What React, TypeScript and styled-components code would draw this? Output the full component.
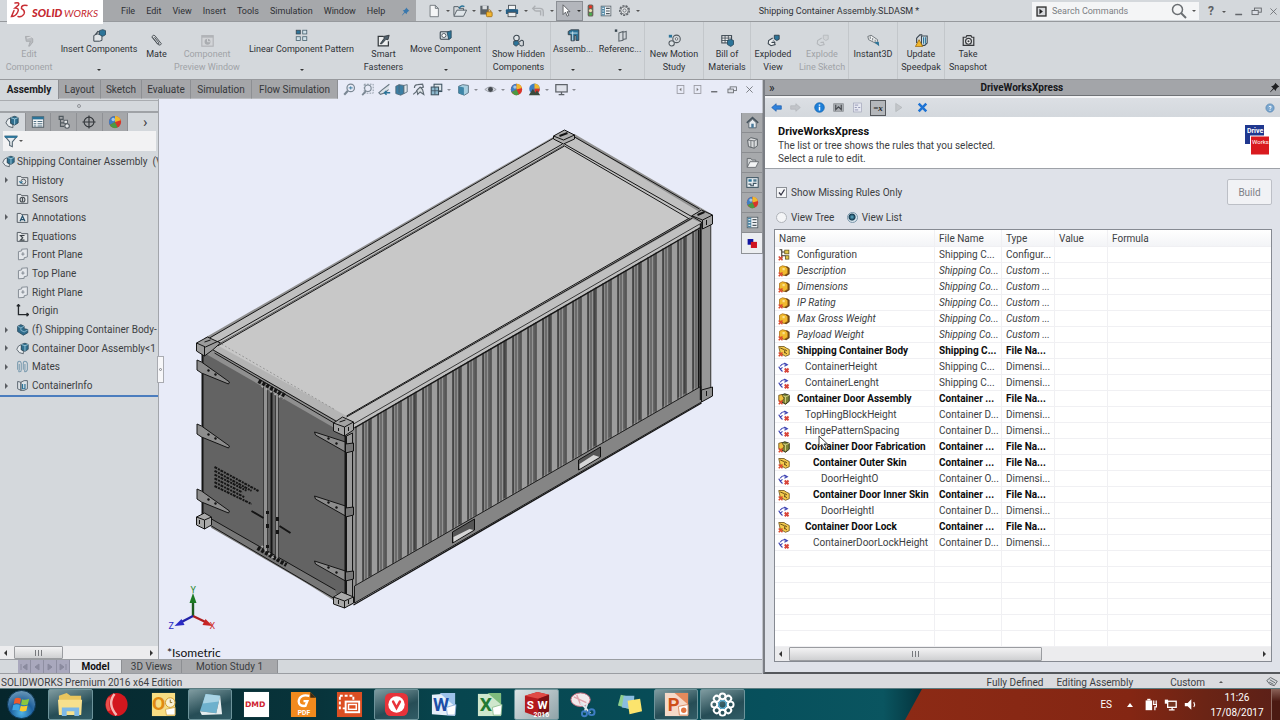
import React, { ReactNode } from 'react';
import styled, { createGlobalStyle, css } from 'styled-components';

const Global = createGlobalStyle`
  *, *::before, *::after { box-sizing: border-box; }
  body { margin: 0; overflow: hidden; }
  body, button, input, table { font-family: Roboto, "Open Sans", sans-serif; font-size: 10px; color: #3c3e42; }
  button { border: 0; padding: 0; background: none; }
  svg { display: block; flex: none; }
`;

/* ---------- icons ---------- */

const dark = '#3b4650';
const blue = '#2c7499';

const wheel = (
  <>
    <circle cx="8" cy="8" r="7" fill="#d8352a" />
    <path d="M8 8 L8 1 A7 7 0 0 0 2 11.5 Z" fill="#3d7fc4" />
    <path d="M8 8 L8 1 A7 7 0 0 1 14.6 6 Z" fill="#f0b92d" />
    <path d="M8 8 L2 11.5 A7 7 0 0 0 11 14.3 Z" fill="#4a9a45" />
    <circle cx="6" cy="5" r="2" fill="#fff" opacity=".55" />
  </>
);

const folder = <path d="M1.5 14 V3 H6 L7 4.5 H14.5 V14 Z" fill="#e3e6e8" stroke="#555d64" strokeWidth="1.2" />;

const assembly = (
  <>
    <path d="M7 3 L3 5 L1 9 L4 13 L9 14.5 L9 11 L6.5 9.5 Z" fill="#e9edf0" stroke="#56616a" strokeWidth="1.1" />
    <path d="M6.5 3 L11 1.5 L15 3 V9 L11 11.5 L6.5 9.5 Z" fill="#2f6f8f" stroke="#29495a" />
    <path d="M6.5 3 L11 4.5 L15 3 M11 4.5 V11" fill="none" stroke="#a7d1e2" />
  </>
);

const art: Record<string, ReactNode> = {
  file: <path d="M3.5 1.5 H9.5 L13 5 V14.5 H3.5 Z M9.5 1.5 V5 H13" fill="#f4f5f6" stroke="#6b7278" />,
  open: <><path d="M1 13 V3 H6 L7 5 H12 V8" fill="none" stroke="#4c555c" /><path d="M1 14 L4.5 7 H15.5 L12 14 Z" fill="#dfe5e9" stroke="#4c555c" /><path d="M7 5 Q9 1 13 3" fill="none" stroke={blue} strokeWidth="1.8" /></>,
  save: <><path d="M1.5 2 H11 V12 H1.5 Z" fill="#5b6268" /><rect x="4" y="2" width="5" height="4" fill="#d9dcdf" /><rect x="8.5" y="9" width="6.5" height="5.5" rx="1" fill="#f2b630" stroke="#a3711a" /><path d="M10 9 V7.5 Q11.8 5.500 13.500 7.500 V9" fill="none" stroke="#a3711a" /></>,
  print: <><rect x="4" y="1.5" width="8" height="5" fill="#f2f3f4" stroke="#4b5258" /><rect x="1" y="6" width="14" height="5.5" rx="1" fill="#255f86" /><rect x="3.5" y="9.5" width="9" height="5" fill="#e9ecee" stroke="#4b5258" /></>,
  undo: <path d="M2 5 H10 Q14 5 14 9 V14 M5 2 L2 5 L5 8 M5 8 H11 V13" fill="none" stroke="#adb0b4" strokeWidth="1.6" />,
  arrow: <path d="M5 1 V13 L8 10 L10 15 L12 14 L10 9.5 H13.5 Z" fill="#fff" stroke="#4a4d52" />,
  traffic: <><rect x="4.5" y="0.5" width="7" height="15" rx="2" fill="#6b665c" /><circle cx="8" cy="3.5" r="2" fill="#e53525" /><circle cx="8" cy="8" r="2" fill="#e9dfb3" /><circle cx="8" cy="12.4" r="2" fill="#49ae4d" /></>,
  list: <><rect x="1.5" y="1.5" width="13" height="13" fill="#eff1f3" stroke="#4e5960" /><rect x="2" y="2" width="4.5" height="12" fill="#4f86a4" /><path d="M8 4.5 H13 M8 8 H13 M8 11.5 H13" stroke="#4e5960" strokeWidth="1.4" /><path d="M3 4.5 H5.5 M3 8 H5.5 M3 11.5 H5.5" stroke="#dfeaf0" strokeWidth="1.4" /></>,
  gear: <><circle cx="8" cy="8" r="5.8" fill="none" stroke="#62676c" strokeWidth="2" strokeDasharray="2.6 1.4" /><circle cx="8" cy="8" r="4.6" fill="#e6e8ea" stroke="#62676c" /><circle cx="8" cy="8" r="2" fill="none" stroke="#62676c" /></>,
  pin: <path d="M9 1 L15 7 L13 7.5 L10.5 10 L10 13 L7 10 L2 15 L1.5 14.5 L6 9 L3 6 L6 5.5 L8.5 3 Z" fill="#3a78ad" />,
  pinDark: <path d="M9 1 L15 7 L13 7.5 L10.5 10 L10 13 L7 10 L2 15 L1.5 14.5 L6 9 L3 6 L6 5.5 L8.5 3 Z" fill="#1f2022" />,
  prompt: <><rect x="1.5" y="1.5" width="13" height="13" fill="#d8dadd" stroke="#333" strokeWidth="2" /><path d="M5 4 L10 8 L5 12 V8 Z" fill="#222" /></>,
  search: <><circle cx="6.5" cy="6.5" r="5" fill="none" stroke="#6a6e72" strokeWidth="1.5" /><path d="M10 10 L15 15" stroke="#6a6e72" strokeWidth="2" /></>,
  min: <path d="M2 12 H13" stroke="#63666b" strokeWidth="2.4" />,
  restore: <><rect x="5" y="3" width="10" height="6" fill="none" stroke="#63666b" strokeWidth="1.3" /><rect x="1.5" y="6.5" width="9" height="6" fill="#dcdfe6" stroke="#63666b" strokeWidth="1.3" /></>,
  close: <path d="M2.5 2.5 L13.5 13.5 M13.5 2.5 L2.5 13.5" stroke="#63666b" strokeWidth="1.4" />,
  dockL: <><rect x="2" y="1" width="12" height="14" fill="none" stroke="#9698a0" strokeWidth="1.5" /><path d="M9.5 5 L6 8 L9.5 11 Z" fill="#777" /></>,
  dockR: <><rect x="2" y="1" width="12" height="14" fill="none" stroke="#9698a0" strokeWidth="1.5" /><path d="M6.5 5 L10 8 L6.5 11 Z" fill="#777" /></>,
  /* command ribbon */
  edit: <><path d="M3 3 H9 L12 6 V10 L8 15 H7 L9 9 L4 9 Z" fill="#b9bcc0" stroke="#a2a5a9" /><path d="M5 5 L12 3" stroke="#d9dbde" strokeWidth="1.6" /></>,
  insert: <><path d="M1 8 L5 6 L11 7 V14 L8 15 H1 Z" fill="#e2e6e9" stroke={dark} strokeWidth="1.2" /><path d="M8 2 L12 0.8 L15.4 2 V7 L12 9 L8 7 Z" fill={blue} stroke="#27475a" /><path d="M3 7 L6 3 L8 4" fill="none" stroke={dark} strokeWidth="1.4" /></>,
  clip: <path d="M3 4 L10 13 Q13 15 14 12 L6 2 Q3 0.5 2.5 4 L9 12 Q11 13 11 11 L5.5 4" fill="none" stroke="#4d5358" strokeWidth="1.2" />,
  preview: <><rect x="1" y="2" width="14" height="13" fill="#d2d4d7" stroke="#b0b3b7" strokeWidth="1.4" /><path d="M1 3.5 H15" stroke="#b0b3b7" strokeWidth="2" /><circle cx="8" cy="9.5" r="3.6" fill="#a9acb0" /><path d="M8 6 V9.5 H11" stroke="#dcdee0" fill="none" /></>,
  pattern: <><rect x="1.5" y="1.5" width="5" height="4.6" fill={blue} stroke={dark} /><rect x="9.5" y="1.5" width="5" height="4.6" fill="#cfe0e8" stroke="#48616f" /><rect x="1.5" y="9.5" width="5" height="4.6" fill="#cfe0e8" stroke="#48616f" /><rect x="9.5" y="9.5" width="5" height="4.6" fill="#cfe0e8" stroke="#48616f" /></>,
  fastener: <><path d="M8 3 H1.5 V14.5 H14 V9" fill="#eceeef" stroke="#33383c" strokeWidth="1.5" /><path d="M4 12 L9 5 L8 3 L15 1.5 L13.5 7 L11 6.5 L6 12 Z" fill="#50606b" stroke="#2c3337" /></>,
  move: <><rect x="1.5" y="3.5" width="11" height="9" rx="1" fill="#d2dadf" stroke={dark} strokeWidth="1.3" /><circle cx="6" cy="8" r="2.5" fill="#fff" stroke={dark} /><path d="M10 4 L15 2 V11 L12 13 Z" fill={blue} stroke="#27475a" /></>,
  hidden: <><circle cx="5.5" cy="5" r="3.4" fill="#dfe4e7" stroke={dark} strokeWidth="1.3" /><path d="M2 9 L7 8 L9 12 L5 15 L2 13 Z" fill={blue} stroke={dark} /><path d="M9 10 Q12 6 14 9 V14 Q11 16 9 13" fill="none" stroke={dark} strokeWidth="1.3" /></>,
  features: <><path d="M1.5 3 L5 1 H14.5 V14 H11 V8 H9 V14.5 H5 V7 L1.5 7 Z" fill={blue} stroke={dark} strokeWidth="1.2" /><path d="M7 3 V14 M4 5 H13" stroke="#c8e0ec" strokeWidth="1.2" /></>,
  reference: <><path d="M6 5 L11 3 V14 L6 15 Z M11 4 L15 3 V12 L11 13" fill="none" stroke="#5b646b" strokeWidth="1.3" /><rect x="1" y="0.5" width="3" height="3" fill="#38464f" /></>,
  motion: <><circle cx="10.5" cy="6" r="4.6" fill="none" stroke="#525a60" strokeWidth="1.3" /><circle cx="10.5" cy="6" r="1.5" fill="#fff" stroke="#525a60" /><circle cx="4.5" cy="11.5" r="3.3" fill="#dce1e4" stroke="#525a60" strokeWidth="1.3" /><rect x="1" y="1" width="4" height="3.4" fill={blue} /></>,
  bom: <><rect x="1" y="2" width="12" height="9" fill="#f0f2f3" stroke={dark} strokeWidth="1.3" /><path d="M1 5 H13 M1 8 H13 M5 2 V11 M9 2 V11" stroke={dark} /><path d="M8 8 L12 6.5 L15.4 8 V13 L12 15.3 L8 13 Z" fill={blue} stroke="#27475a" /></>,
  explode: <><path d="M7 5 L2 8 L1.5 12 L5 14.5 L10 13 L9 10 L5.5 10.5" fill="#eceff0" stroke={dark} strokeWidth="1.3" /><path d="M9 1.5 H15 V6.5 L12 8 L9 6 Z" fill={blue} stroke="#27343c" /><path d="M8 8 L11 11" stroke={dark} strokeDasharray="1 1" /></>,
  explodeOff: <><path d="M7 5 L2 8 L1.5 12 L5 14.5 L10 13 L9 10 L5.5 10.5" fill="none" stroke="#b4b7bb" strokeWidth="1.3" /><path d="M9 1.5 H15 V6.5 L12 8 L9 6 Z" fill="#cfd2d5" stroke="#b4b7bb" /></>,
  instant: <><path d="M1 3 L5 1.5 L13 7 L12 12 L2 7 Z" fill="#eef0f1" stroke="#5a6167" /><path d="M4 3 V6 M7 5 V8 M10 7 V10" stroke="#5a6167" /><path d="M9 10 L15 15 L14.5 9.5 Z" fill={blue} /></>,
  speedpak: <><path d="M2 5 L6 1 H9 M2 5 V11" stroke={dark} strokeWidth="1.4" fill="none" /><path d="M8 2.5 H15 V11 L12 14 H8 Z" fill="#d4e3ea" stroke={dark} strokeWidth="1.3" /><path d="M10.5 4 V12 M12.8 4 V12" stroke={blue} strokeWidth="1.3" /><path d="M5 7 L9.5 15.5 H0.5 Z" fill="#f1b72c" stroke="#9c6d12" /></>,
  camera: <><path d="M1.5 4 H5 L6 2 H11 L12 4 H14.5 V14 H1.5 Z" fill="#d7dadd" stroke="#37393c" strokeWidth="1.5" /><circle cx="8" cy="9" r="3.6" fill="#f2f3f4" stroke="#37393c" strokeWidth="1.5" /><circle cx="8" cy="9" r="1.3" fill="#37393c" /></>,
  /* heads-up view bar */
  zoomFit: <><circle cx="9.500" cy="6" r="4.6" fill="none" stroke="#7a8793" strokeWidth="1.5" /><path d="M6 9.5 L1.5 14.5" stroke="#7a8793" strokeWidth="2.6" /><path d="M7 6 H12 M9.500 4 V8" stroke={blue} /></>,
  zoomArea: <><rect x="4" y="1.5" width="11" height="11" fill="none" stroke="#7a8793" strokeDasharray="2 1.5" /><circle cx="8.5" cy="6.5" r="4" fill="none" stroke="#7a8793" strokeWidth="1.4" /><path d="M6 10 L1.5 15" stroke="#7a8793" strokeWidth="2.2" /></>,
  prevView: <><path d="M14 1.500 L5 8.500 L1 12 L3 14 L9 12 L13 8" fill="#dbe2e8" stroke="#677682" strokeWidth="1.3" /><path d="M8 12 H15 M10.500 9.500 L8 12 L10.500 14.500" fill="none" stroke={blue} strokeWidth="1.8" /></>,
  section: <><path d="M1 4 L5 2 L11 3 V13 L7 15 L1 13 Z" fill="#3b7fa5" stroke="#506573" /><path d="M11 3 L15 2 V11 L11 13 Z M5 2 V12" fill="#dfe6ea" stroke="#506573" /></>,
  dynamic: <><path d="M3 6 Q3 2 7 2 L13 1.500 L14 5 L8 7 L5 11 L1.500 14" fill="none" stroke="#5f6a73" strokeWidth="1.5" /><path d="M6 9 L10 5 L13 8 L14.500 14 L10 11 L7 14 Z" fill="#dce2e6" stroke="#5f6a73" strokeWidth="1.4" /></>,
  orient: <><rect x="5" y="1.5" width="9.5" height="9" fill="#dfe7eb" stroke="#3e5361" strokeWidth="1.3" /><rect x="1.5" y="5" width="9" height="9.5" fill="#8db8cd" stroke="#3e5361" strokeWidth="1.3" /><path d="M6 5 V14 M1.5 9.5 H14" stroke="#3e5361" /></>,
  cube: <><path d="M2 4 L7 2 L14 3 V12 L9 15 L2 12.5 Z" fill="#a8cfe0" stroke="#4c6676" /><path d="M2 4 L8.5 5.5 V15 L2 12.5 Z" fill="#3f86a8" /></>,
  eye: <><path d="M1 8 Q8 1.5 15 8 Q8 14 1 8 Z" fill="#cfd2d9" stroke="#9397a0" /><circle cx="8" cy="8" r="3" fill="#44494f" /></>,
  wheel,
  scene: <><circle cx="8" cy="7" r="6.5" fill="#3d7fc4" /><path d="M8 7 L8 .5 A6.5 6.5 0 0 1 14.5 7 Z" fill="#f0b92d" /><path d="M8 7 H14.5 A6.5 6.5 0 0 1 8 13.5 Z" fill="#d8352a" /><path d="M1 15 L6 7 L9 12 L11 9 L15 15 Z" fill="#3b4b3d" /></>,
  monitor: <><rect x="1" y="2" width="14" height="9" fill="#dfe2ea" stroke="#5d6268" strokeWidth="1.5" /><path d="M8 11 V14 M4.5 14.3 H11.5" stroke="#5d6268" strokeWidth="1.6" /></>,
  /* feature tree */
  assembly,
  props: <><rect x="1.5" y="2" width="13" height="12" fill="#f2f4f5" stroke="#48545c" /><rect x="1.5" y="2" width="13" height="3" fill={blue} /><path d="M3 7.5 H6 M3 10 H6 M3 12.5 H6 M7.5 7.5 H13 M7.5 10 H13 M7.5 12.5 H13" stroke="#517083" strokeWidth="1.2" /></>,
  config: <><path d="M2.5 1.5 H7 V5 H2.5 Z M4 5 V13 H8 M4 9 H9" fill="none" stroke="#50585e" strokeWidth="1.3" /><rect x="8" y="6" width="4" height="3.5" fill="#e8eaec" stroke="#50585e" /><circle cx="11.5" cy="12.5" r="2.6" fill="#e8eaec" stroke="#50585e" strokeWidth="1.2" /></>,
  target: <><circle cx="8" cy="8" r="5.6" fill="none" stroke="#33373b" strokeWidth="1.3" /><path d="M8 0.5 V15.5 M0.5 8 H15.5" stroke="#33373b" strokeWidth="1.3" /></>,
  filter: <><path d="M1 2.5 H15 L9.5 9 V14.5 L6.5 13 V9 Z" fill="#e8ecef" stroke="#4d5f6c" strokeWidth="1.2" /><path d="M1 2 H15 V4.5 H1 Z" fill={blue} /></>,
  history: <>{folder}<circle cx="9" cy="9.4" r="3" fill="none" stroke="#555d64" strokeWidth="1.2" /><path d="M4 9 L6 11 L8 9" fill="none" stroke={blue} strokeWidth="1.4" /></>,
  sensors: <>{folder}<circle cx="8" cy="9.4" r="3" fill="none" stroke="#444b51" strokeWidth="1.3" /><path d="M8 7 V12" stroke="#444b51" strokeWidth="1.6" /></>,
  notes: <>{folder}<path d="M5 12.5 L8 6 L11 12.5 M6 10.6 H10" fill="none" stroke="#24516d" strokeWidth="1.5" /></>,
  sigma: <>{folder}<path d="M10.5 6.8 H5.5 L8.3 9.6 L5.5 12.4 H10.5" fill="none" stroke="#3a4147" strokeWidth="1.4" /></>,
  plane: <path d="M3 14.500 V4.500 L7 3.500 V1.500 L14 1 V11 L10 12 V14 Z M8.500 5 V9.500 M6.500 7.500 H10.500" fill="#e5e8ec" stroke="#7d858e" strokeWidth="1.1" />,
  origin: <path d="M3 1 V13 H15 M1 3 L3 0.6 L5 3 M13 11 L15.4 13 L13 15" fill="none" stroke="#24282c" strokeWidth="1.6" />,
  part: <><path d="M2 4 L6 2 L10 4 V7 L14.5 8 V12 L9 15 L2 10.5 Z" fill="#2f6b8b" stroke="#27475a" /><path d="M2 4 L6 6 L10 4 M6 6 V9 L10 11 L14.5 8.5" fill="none" stroke="#93c0d4" /></>,
  mates: <><path d="M2 12 V4 Q2 1.5 4 1.5 T6.5 4 V12 Q6.5 14.5 4.5 14.5 T4 12 V5" fill="none" stroke="#7c9cb0" strokeWidth="1.3" /><path d="M9 12 V4 Q9 1.5 11 1.5 T14 4 V12 Q13 14.5 11.5 14.5 T11 12 V5" fill="none" stroke="#7c9cb0" strokeWidth="1.3" /></>,
  info: <><path d="M2 3 L6 4 V14 L2 12 Z M6 4 L10 2 H14 V12 L10 14 H6 Z" fill="#dde3e7" stroke="#5a666f" strokeWidth="1.2" /><path d="M8 6 V12 H11 V6" fill="none" stroke={blue} strokeWidth="1.5" /></>,
  /* task pane */
  home: <><path d="M1 8.5 L8 2 L15 8.5" fill="none" stroke="#48555f" strokeWidth="2" /><path d="M3.5 8 V14.5 H12.5 V8 L8 4 Z" fill="#e9edf0" stroke="#48555f" /><rect x="6.5" y="9.5" width="3" height="5" fill="#48799a" /></>,
  library: <><path d="M2 5 L6 2 L14 4 V12 L10 15 L3 13 Z" fill="#d8dadc" stroke="#5e6368" strokeWidth="1.2" /><path d="M6 6 V14 M10 6 V15 M2 5 L10 6 L14 4" fill="none" stroke="#5e6368" /></>,
  explorer: <><path d="M1.5 14 V3 H6 L7.5 5 H12 V7" fill="#cfd2d4" stroke="#5a5f64" /><path d="M1.5 14 L5 7 H15.5 L12 14 Z" fill="#f3f4f5" stroke="#5a5f64" /></>,
  palette: <><rect x="1" y="2" width="14" height="12" fill="#e8eef2" stroke="#3f5563" strokeWidth="1.3" /><rect x="3" y="4" width="4" height="3" fill={blue} /><rect x="9" y="4" width="4" height="3" fill="#527a90" /><path d="M3 10 H6 V12 H9 V9 H13" stroke="#3f5563" fill="none" strokeWidth="1.4" /></>,
  driveworks: <><rect x="2" y="2.500" width="7" height="7" fill="#1014a0" /><rect x="6" y="6" width="7.500" height="7.500" fill="#d01420" /></>,
  /* add-in toolbar */
  back: <path d="M1 8 L7.5 2.5 V5.5 H15 V10.5 H7.5 V13.5 Z" fill="#2f82dc" stroke="#1c5cab" />,
  forward: <path d="M15 8 L8.5 2.5 V5.5 H1 V10.5 H8.5 V13.5 Z" fill="#c1c4c9" stroke="#b0b3b8" />,
  about: <><circle cx="8" cy="8" r="7" fill="#1e7fd8" stroke="#1262ae" /><path d="M8 7 V12.2 M8 3.6 V5.6" stroke="#fff" strokeWidth="2.2" /></>,
  capture: <><rect x="1" y="2.5" width="14" height="11" fill="#a9adb2" stroke="#85898e" /><path d="M4 4 V11 L8 7 L12 11 V4 M6 8 H10" stroke="#474b50" fill="none" strokeWidth="1.7" /></>,
  form: <><rect x="2" y="1.5" width="12" height="13" fill="#e6e8f1" stroke="#a1a5b9" /><path d="M4 4.5 H9 M4 8 H7 M9 8 H12 M4 11.5 H9" stroke="#8d91b0" strokeWidth="1.3" /></>,
  play: <path d="M4 2 L13 8 L4 14 Z" fill="#c3c6ca" stroke="#b1b4b8" />,
  cross: <path d="M2.5 2.5 L13.5 13.5 M13.5 2.5 L2.5 13.5" stroke="#1c72d4" strokeWidth="3.6" />,
  help: <><circle cx="8" cy="8" r="6.6" fill="#7ba7cf" stroke="#4d7fae" /><path d="M6 6.3 Q8 3.6 10 6 Q10 7.6 8 8.8 V10 M8 11 V12.6" stroke="#fff" fill="none" strokeWidth="1.5" /></>,
  /* rule rows */
  rConfig: <><path d="M2 1 H5 V14 M5 4 H9 M5 9 H10" stroke="#3a3324" strokeWidth="1.4" fill="none" /><rect x="9" y="1.5" width="5.5" height="5" fill="#e3c84c" stroke="#5c4c14" /><rect x="10" y="9" width="4.5" height="4.5" fill="#e3c84c" stroke="#5c4c14" /><path d="M1 10 L6 15 M6 10 L1 15" stroke="#d84a35" strokeWidth="2.2" /></>,
  rCustom: <><path d="M6 2 L12 1.500 L15.5 4 V12 L11 15 L5 13 Z" fill="#6a4416" /><path d="M2 3 L6 1 L10 2 L12 4 L13 5 V11 L8 14 L2 10 Z" fill="#f0b92e" stroke="#a86e12" /><path d="M6 4 H9 V7 H6 Z" fill="#fbe08a" /><path d="M1 10 L6 15 M6 10 L1 15" stroke="#dc4b2e" strokeWidth="2.2" /></>,
  rPart: <><path d="M1 2 H8 L11 4 L15 6 V13 L10 15 L3 11 Z" fill="#f4ca4e" stroke="#5f4611" /><path d="M3 4 L8 6 M8 9 L12 12 M12 8 L9 6 V11" stroke="#5f4611" strokeWidth="1.2" fill="none" /><path d="M1 10 L6 15 M6 10 L1 15" stroke="#dc4b2e" strokeWidth="2.2" /></>,
  rAsm: <><path d="M4 3 L9 1 L15 3 V11 L10 15 L5 12 Z" fill="#7d8636" stroke="#26260f" strokeWidth="1.2" /><path d="M4 3 L10 5 L15 3 M10 5 V13" stroke="#eee29a" fill="none" /><path d="M1 3 L5 2 L8 7 L5 12 L1 10 Z" fill="#f2c13f" stroke="#5f4611" /><path d="M1 10 L6 15 M6 10 L1 15" stroke="#dc4b2e" strokeWidth="2.2" /></>,
  rDim: <><path d="M3 7 Q6 2 11 4.500 M1 7.500 L3 11 L6 8.500 M8.500 2.500 L12.500 5 L8.500 7 M3 11 L6 14" fill="none" stroke="#4046b4" strokeWidth="1.5" /><path d="M9 10 L14 15 M14 10 L9 15" stroke="#d8453a" strokeWidth="2.6" /></>,
  /* tray */
  battery: <><rect x="2" y="3" width="8" height="12" fill="#fff" /><rect x="4" y="1" width="4" height="2" fill="#fff" /><path d="M12 3 V8 M15 3 V8 M11 8 H15.5 V11 H13.4 V15" stroke="#fff" strokeWidth="1.5" fill="none" /></>,
  network: <><rect x="4.5" y="4" width="10.5" height="7.5" fill="#72331f" stroke="#fff" strokeWidth="1.6" /><path d="M10 11 V14.5 M6 14.6 H13" stroke="#fff" strokeWidth="1.6" /><rect x="1" y="2" width="4" height="5" fill="#fff" /></>,
  sound: <><path d="M1 6 H4.5 L9 1.5 V14.5 L4.5 10 H1 Z" fill="#fff" /><path d="M12 5 Q14 8 12 11" stroke="#fff" strokeWidth="1.4" fill="none" /></>,
  tag: <path d="M1 6 L6 2 L15 7 L11 13 L5 11 Z M5 5 L12 9 M4 8 L10 11" fill="#d6d9dc" stroke="#5d6367" strokeWidth="1.2" />,
};

const Icon = ({ name, size = 13 }: { name: string; size?: number }) => (
  <svg width={size} height={size} viewBox="0 0 16 16" aria-hidden="true">{art[name]}</svg>
);

/* ---------- shared parts ---------- */

const Caret = styled.span<{ $tone?: string }>`
  width: 0;
  height: 0;
  border: 2px solid transparent;
  border-top-color: ${p => p.$tone || '#333'};
  border-bottom: 0;
`;

const Shell = styled.div`
  display: flex;
  flex-direction: column;
  height: 100vh;
  min-height: 600px;
  min-width: 1180px;
  background: #d4d8dc;
  overflow: hidden;
  line-height: 13px;
  white-space: nowrap;
`;

/* ---------- title bar ---------- */

const TitleBar = styled.header`
  display: flex;
  align-items: stretch;
  height: 22px;
  border-bottom: 1px solid #96999d;
  font-size: 9px;
`;

const Brand = styled.div`
  display: flex;
  justify-content: center;
  width: 96px;
  height: 24px;
  margin-left: 7px;
  background: #fff;
  z-index: 1;
`;

const MenuBar = styled.nav`
  display: flex;
  align-items: center;
  gap: 11px;
  width: 313px;
  padding: 1px 0 0 18px;
  background: #a6a8ab;
  button { font-size: 9px; color: #2e3034; }
  button:last-child { margin-left: 5px; }
`;

const QuickBar = styled.div`
  display: flex;
  align-items: center;
  width: 230px;
  padding-left: 11px;
`;

const QuickButton = styled.button<{ $w: number; $on?: boolean }>`
  display: flex;
  align-items: center;
  gap: 5px;
  width: ${p => p.$w}px;
  ${p => p.$on && css`
    height: 20px;
    padding-left: 2px;
    margin-right: 1px;
    background: #b3b6bc;
    border: 1px solid #8b8f95;
  `}
`;

const DocTitle = styled.h1`
  flex: 1;
  margin: 0;
  font-size: 9px;
  font-weight: 400;
  line-height: 23px;
  text-align: center;
  color: #303236;
`;

const SearchBox = styled.form`
  display: flex;
  align-items: center;
  gap: 5px;
  width: 167px;
  height: 18px;
  margin-top: 2px;
  padding: 0 3px 0 4px;
  background: #f4f5f6;
  input {
    flex: 1;
    min-width: 0;
    border: 0;
    padding: 0;
    background: none;
    font-size: 9px;
    outline: 0;
    &::placeholder { color: #7b7e83; opacity: 1; }
  }
`;

const WindowButtons = styled.div`
  display: flex;
  align-items: center;
  gap: 7px;
  width: 81px;
  padding: 2px 3px 0 9px;
  font-size: 12px;
  font-weight: 700;
  color: #5c6064;
  span { margin-right: 1px; }
`;

/* ---------- command ribbon ---------- */

const Ribbon = styled.div`
  display: flex;
  height: 58px;
  border-bottom: 1px solid #97999d;
`;

const Command = styled.button<{ $w: number; $line?: boolean; $menu?: boolean }>`
  display: flex;
  flex-direction: column;
  align-items: center;
  width: ${p => p.$w}px;
  padding-top: ${p => (p.$menu ? 7 : 12)}px;
  border-right: 1px solid ${p => (p.$line ? '#c3c7cb' : 'transparent')};
  font-size: 9px;
  line-height: 13px;
  color: #2f3236;
  white-space: pre-line;
  &:disabled { color: #a0a3a7; }
  span { margin-top: 1px; }
  i { margin-top: 13px; }
`;

/* ---------- workspace ---------- */

const Workspace = styled.main`
  display: flex;
  flex: 1;
  min-height: 0;
`;

const Modeler = styled.section`
  position: relative;
  display: flex;
  flex-direction: column;
  flex: 1;
  min-width: 0;
  border-right: 1px solid #bfc2c8;
`;

const TabRow = styled.div`
  display: flex;
  height: 19px;
  background: #e8ebf7;
`;

const CommandTab = styled.button<{ $w: number; $on?: boolean }>`
  width: ${p => p.$w}px;
  border-right: 1px solid #8d8f93;
  border-bottom: ${p => (p.$on ? 0 : '1px solid #bcbec2')};
  background: ${p => (p.$on ? '#d4d8dc' : '#a5a6a9')};
  color: ${p => (p.$on ? '#1b1c1e' : '#35373a')};
  font-weight: ${p => (p.$on ? 700 : 400)};
`;

const ViewBar = styled.div`
  display: flex;
  align-items: center;
  flex: 1;
  padding: 0 5px 0 5px;
`;

const ViewButton = styled.button<{ $w: number }>`
  display: flex;
  align-items: center;
  gap: 4px;
  width: ${p => p.$w}px;
`;

const Grow = styled.div`flex: 1;`;

const ModelBody = styled.div`
  display: flex;
  flex: 1;
  min-height: 0;
`;

const TreePane = styled.aside`
  position: relative;
  display: flex;
  flex-direction: column;
  width: 159px;
  border-right: 1px solid #a2a5ab;
  background: #d4d8dc;
`;

const PaneGrip = styled.div`
  display: flex;
  align-items: center;
  justify-content: center;
  height: 13px;
  margin-top: 1px;
  border-top: 1px solid #a9acb0;
  border-bottom: 2px solid #9fa2a6;
  &::after {
    content: '';
    width: 4px;
    height: 4px;
    border: 1px solid #909398;
    border-radius: 50%;
  }
`;

const SideGrip = styled.button`
  position: absolute;
  right: -6px;
  top: 257px;
  display: flex;
  align-items: center;
  justify-content: center;
  width: 7px;
  height: 27px;
  background: #f7f7f9;
  border: 1px solid #a9abb1;
  z-index: 1;
  &::after {
    content: '';
    width: 3px;
    height: 3px;
    border: 1px solid #88898f;
    border-radius: 50%;
  }
`;

const PaneTabs = styled.div`
  display: flex;
  height: 18px;
  align-items: stretch;
  button {
    display: flex;
    align-items: center;
    justify-content: center;
    width: 27px;
    background: #a5a7aa;
    border-right: 1px solid #8f9195;
  }
  button:first-child { background: none; }
  button:last-child { background: none; border: 0; margin-left: 4px; font-size: 15px; }
`;

const FilterBox = styled.label`
  display: flex;
  align-items: center;
  gap: 1px;
  height: 20px;
  margin: 0 2px 1px 3px;
  padding-left: 1px;
  background: #f2f2f3;
  input { flex: 1; min-width: 0; border: 0; background: none; outline: 0; }
`;

const Tree = styled.ul`
  display: grid;
  grid-auto-rows: 1fr;
  height: 245px;
  margin: 0;
  padding: 0;
  list-style: none;
  border-bottom: 2px solid #4b7dbe;
  overflow: hidden;
`;

const TreeItem = styled.li<{ $root?: boolean }>`
  display: flex;
  align-items: center;
  gap: ${p => (p.$root ? 2 : 3)}px;
  padding-left: ${p => (p.$root ? 2 : 5)}px;
  overflow: hidden;
  b { display: flex; width: ${p => (p.$root ? 0 : 8)}px; }
`;

const Expander = styled.i`
  border: 3px solid transparent;
  border-left: 3px solid #5b5e63;
  border-right: 0;
`;

const ScrollBar = styled.div<{ $h: number }>`
  display: flex;
  align-items: center;
  justify-content: space-between;
  height: ${p => p.$h}px;
  padding: 0 5px 0 4px;
  background: #ececee;
`;

const ScrollArrow = styled.i<{ $right?: boolean }>`
  border: 3px solid transparent;
  ${p => (p.$right ? 'border-left: 3px solid #333; border-right: 0;' : 'border-right: 3px solid #333; border-left: 0;')}
`;

const Thumb = styled.div<{ $w: string; $gap: number }>`
  display: flex;
  align-items: center;
  justify-content: center;
  width: ${p => p.$w};
  height: 100%;
  margin-left: ${p => p.$gap}px;
  margin-right: auto;
  border: 1px solid #9a9ca0;
  border-radius: 1px;
  background: linear-gradient(#f3f3f4, #cfd0d2);
  &::after {
    content: '';
    width: 7px;
    height: 6px;
    background: repeating-linear-gradient(90deg, #77797d 0 1px, transparent 1px 3px);
  }
`;

const Canvas = styled.div`
  position: relative;
  flex: 1;
  min-width: 0;
  background: #e8ebf8;
  & > svg { width: 100%; height: 100%; }
`;

const ViewName = styled.span`
  position: absolute;
  left: 8px;
  bottom: 0;
  font-family: Lato, sans-serif;
  font-size: 12px;
  color: #111;
`;

const TaskTabs = styled.div`
  position: absolute;
  right: -1px;
  top: 33px;
  display: flex;
  flex-direction: column;
  width: 22px;
  border: 1px solid #8f9297;
  border-top: 0;
  button {
    display: flex;
    align-items: center;
    justify-content: center;
    height: 20px;
    background: #a7a9ac;
    border-bottom: 1px solid #8b8d91;
  }
  button:last-child { background: #eceef1; border: 0; }
`;

const SheetTabs = styled.div`
  display: flex;
  height: 15px;
  border-top: 1px solid #9a9da2;
  border-bottom: 1px solid #9a9da2;
  padding-left: 18px;
`;

const SheetNav = styled.button`
  display: flex;
  align-items: center;
  justify-content: center;
  width: 13px;
  background: #a9a8bd;
  border-right: 1px solid #8f8fa2;
`;

const SheetTab = styled.button<{ $w: number; $on?: boolean }>`
  width: ${p => p.$w}px;
  border-right: 1px solid #8d8f93;
  background: ${p => (p.$on ? '#e4e6ea' : '#a7a8ab')};
  font-weight: ${p => (p.$on ? 700 : 400)};
  color: ${p => (p.$on ? '#111' : '#3a3c40')};
`;

/* ---------- add-in panel ---------- */

const Panel = styled.section`
  display: flex;
  flex-direction: column;
  width: 517px;
  border-left: 2px solid #7b7e84;
  border-bottom: 2px solid #55585c;
  background: #dfe2e9;
`;

const PanelTitle = styled.div`
  display: flex;
  align-items: center;
  justify-content: space-between;
  height: 16px;
  padding-left: 4px;
  background: #a3a5a9;
  border-bottom: 1px solid #707377;
  color: #16171a;
  h2 { margin: 0; font-size: 10px; font-weight: 700; }
  span { font-size: 12px; line-height: 10px; }
`;

const PanelTools = styled.div`
  display: flex;
  align-items: center;
  gap: 6px;
  height: 21px;
  padding: 0 4px 0 5px;
  border-top: 2px solid #f3f4f6;
  background: linear-gradient(#dcdfe4, #d3d8dd);
`;

const Tool = styled.button<{ $on?: boolean; $gap?: number }>`
  display: flex;
  align-items: center;
  justify-content: center;
  width: ${p => (p.$on ? 16 : 13)}px;
  height: 16px;
  margin-left: ${p => p.$gap || 0}px;
  font: italic 700 9px "Liberation Serif", serif;
  color: #222;
  ${p => p.$on && css`
    background: #b4b7bb;
    border: 1px solid #55585c;
  `}
`;

const Intro = styled.div`
  display: flex;
  justify-content: space-between;
  height: 52px;
  padding: 8px 10px 0 13px;
  background: #fff;
  border-bottom: 1px solid #9ea2a8;
  p { margin: 0; line-height: 13px; }
  h3 { margin: 0 0 1px; font-size: 11px; line-height: 13px; color: #111; }
`;

const Options = styled.div`
  display: flex;
  justify-content: space-between;
  align-items: flex-start;
  height: 60px;
  padding: 10px 8px 0 11px;
`;

const Choices = styled.div`
  display: grid;
  grid-template-columns: auto auto;
  column-gap: 12px;
  row-gap: 12px;
  padding-top: 7px;
  justify-content: start;
  label { display: flex; align-items: center; gap: 4px; }
  label:first-child { grid-column: 1 / -1; }
  input {
    appearance: none;
    width: 11px;
    height: 11px;
    margin: 0;
    border: 1px solid #8c9096;
    background: #f4f5f7;
  }
  input[type=checkbox] {
    background: #f4f5f7 url("data:image/svg+xml,%3Csvg xmlns='http://www.w3.org/2000/svg' viewBox='0 0 9 9'%3E%3Cpath d='M2 4.5L4 7L7.5 1.5' fill='none' stroke='%23334' stroke-width='1.3'/%3E%3C/svg%3E");
  }
  input[type=radio] { border-radius: 50%; border-color: #b0b4ba; }
  input[type=radio]:checked {
    border-color: #7b97aa;
    background: radial-gradient(circle at 45% 45%, #5fb0cc 0, #14394f 3px, #d9e6ee 4px);
  }
`;

const BuildButton = styled.button`
  width: 45px;
  height: 26px;
  border: 1px solid #bcbfc6;
  border-radius: 2px;
  background: #f1f2f5;
  color: #7d8086;
`;

const RuleBox = styled.div`
  position: relative;
  display: flex;
  flex-direction: column;
  flex: 1;
  min-height: 0;
  margin: 0 8px 10px 9px;
  border: 1px solid #868a92;
  background: #fff;
`;

const RuleScroll = styled.div`
  flex: 1;
  min-height: 0;
  overflow: hidden;
`;

const RuleTable = styled.table`
  width: 100%;
  table-layout: fixed;
  border-collapse: separate;
  border-spacing: 0;
  th, td {
    height: 16px;
    padding: 0 0 0 4px;
    border-right: 1px solid #f0f0f3;
    border-bottom: 1px solid #f0f0f3;
    line-height: 14px;
    text-align: left;
    font-weight: inherit;
    overflow: hidden;
  }
  th { height: 17px; padding-top: 1px; font-weight: 400; background: linear-gradient(#fff, #f3f4f7); }
  th:last-child, td:last-child { border-right: 0; }
`;

const RuleRow = styled.tr<{ $kind: string }>`
  ${p => p.$kind === 'custom' && 'font-style: italic;'}
  ${p => (p.$kind === 'part' || p.$kind === 'asm') && 'font-weight: 700; color: #0c0c0d;'}
`;

const RuleName = styled.div<{ $level: number }>`
  display: flex;
  align-items: center;
  gap: ${p => 7 + p.$level * 8}px;
  margin-left: -1px;
`;

const Pointer = styled.svg`
  position: absolute;
  left: 43px;
  top: 205px;
`;

/* ---------- status and task bars ---------- */

const StatusBar = styled.footer`
  display: flex;
  align-items: center;
  height: 14px;
  padding: 2px 2px 0 1px;
  background: #dadbde;
  span:nth-of-type(2) { margin-right: 13px; }
  span:nth-of-type(3) { margin-right: 37px; }
  i { margin: 0 43px 0 14px; border: 2px solid transparent; border-bottom-color: #555; border-top: 0; }
`;

const TaskBar = styled.div`
  position: relative;
  display: flex;
  align-items: stretch;
  height: 32px;
  background: linear-gradient(90deg, #06262c, #08343b 25%, #07464f 36%, #07505c 60%, #0a5560 69%, #04343d 72%);
  border-top: 1px solid #5b7c80;
  &::before {
    content: '';
    position: absolute;
    inset: 0 0 0 905px;
    background: linear-gradient(90deg, #8c2a15, #842613 60%, #6b2415 80%, #5b2018);
    clip-path: polygon(17px 0, 100% 0, 100% 100%, 0 100%);
  }
`;

const StartButton = styled.button`
  width: 47px;
  padding-left: 6px;
`;

const Launchers = styled.div`
  display: grid;
  grid-template-columns: repeat(15, 1fr);
  width: 699px;
`;

const Launcher = styled.button<{ $run?: boolean; $active?: boolean }>`
  display: flex;
  align-items: center;
  justify-content: center;
  margin: 0 1px;
  ${p => p.$run && css`
    border: 1px solid #6d949b;
    border-radius: 2px;
    background: ${p.$active ? 'linear-gradient(135deg, #dde3e5, #8fa3a8)' : 'linear-gradient(160deg, #7f9ba0, #264d56 60%, #315c66)'};
  `}
`;

const Tray = styled.div`
  position: relative;
  display: flex;
  align-items: center;
  gap: 7px;
  margin-left: auto;
  color: #fff;
  i { margin: 0 4px 0 8px; border: 3px solid transparent; border-bottom: 4px solid #fff; border-top: 0; }
`;

const Clock = styled.time`
  display: flex;
  flex-direction: column;
  align-items: center;
  width: 54px;
  margin-left: 6px;
  font-size: 10px;
  line-height: 15px;
`;

const ShowDesktop = styled.button`
  width: 9px;
  align-self: stretch;
  border-left: 1px solid #8f6a60;
  background: linear-gradient(#8b6258, #4b1a12 40%);
`;

/* ---------- data ---------- */

const menus = ['File', 'Edit', 'View', 'Insert', 'Tools', 'Simulation', 'Window', 'Help'];

const quick: [string, number][] = [['file', 26], ['open', 26], ['save', 26], ['print', 26], ['undo', 25]];

type Cmd = { icon: string; text: string; w: number; line?: boolean; menu?: boolean; off?: boolean };
const commands: Cmd[] = [
  { icon: 'edit', text: 'Edit\nComponent', w: 59, off: true },
  { icon: 'insert', text: 'Insert Components', w: 81, menu: true },
  { icon: 'clip', text: 'Mate', w: 34 },
  { icon: 'preview', text: 'Component\nPreview Window', w: 67, off: true },
  { icon: 'pattern', text: 'Linear Component Pattern', w: 122, menu: true },
  { icon: 'fastener', text: 'Smart\nFasteners', w: 42 },
  { icon: 'move', text: 'Move Component', w: 82, menu: true, line: true },
  { icon: 'hidden', text: 'Show Hidden\nComponents', w: 64, line: true },
  { icon: 'features', text: 'Assemb...', w: 45, menu: true },
  { icon: 'reference', text: 'Referenc...', w: 49, menu: true, line: true },
  { icon: 'motion', text: 'New Motion\nStudy', w: 59, line: true },
  { icon: 'bom', text: 'Bill of\nMaterials', w: 47, line: true },
  { icon: 'explode', text: 'Exploded\nView', w: 45 },
  { icon: 'explodeOff', text: 'Explode\nLine Sketch', w: 53, line: true, off: true },
  { icon: 'instant', text: 'Instant3D', w: 49, line: true },
  { icon: 'speedpak', text: 'Update\nSpeedpak', w: 47, line: true },
  { icon: 'camera', text: 'Take\nSnapshot', w: 47 },
];

const tabs: [string, number][] = [['Assembly', 59], ['Layout', 42], ['Sketch', 41], ['Evaluate', 49], ['Simulation', 61], ['Flow Simulation', 86]];

const views: [string, number, boolean?][] = [
  ['zoomFit', 18], ['zoomArea', 17], ['prevView', 17], ['section', 17], ['dynamic', 18],
  ['orient', 27, true], ['cube', 27, true], ['eye', 26, true], ['wheel', 18], ['scene', 27, true], ['monitor', 26, true],
];

const tree: [string, string, boolean?][] = [
  ['history', 'History', true], ['sensors', 'Sensors'], ['notes', 'Annotations', true], ['sigma', 'Equations'],
  ['plane', 'Front Plane'], ['plane', 'Top Plane'], ['plane', 'Right Plane'], ['origin', 'Origin'],
  ['part', '(f) Shipping Container Body-', true], ['assembly', 'Container Door Assembly<1', true],
  ['mates', 'Mates', true], ['info', 'ContainerInfo', true],
];

const ruleIcon: Record<string, string> = { config: 'rConfig', custom: 'rCustom', part: 'rPart', asm: 'rAsm', dim: 'rDim' };
const rules: [string, number, string, string, string][] = [
  ['config', 0, 'Configuration', 'Shipping C...', 'Configur...'],
  ['custom', 0, 'Description', 'Shipping Co...', 'Custom ...'],
  ['custom', 0, 'Dimensions', 'Shipping Co...', 'Custom ...'],
  ['custom', 0, 'IP Rating', 'Shipping Co...', 'Custom ...'],
  ['custom', 0, 'Max Gross Weight', 'Shipping Co...', 'Custom ...'],
  ['custom', 0, 'Payload Weight', 'Shipping Co...', 'Custom ...'],
  ['part', 0, 'Shipping Container Body', 'Shipping C...', 'File Na...'],
  ['dim', 1, 'ContainerHeight', 'Shipping C...', 'Dimensi...'],
  ['dim', 1, 'ContainerLenght', 'Shipping C...', 'Dimensi...'],
  ['asm', 0, 'Container Door Assembly', 'Container ...', 'File Na...'],
  ['dim', 1, 'TopHingBlockHeight', 'Container D...', 'Dimensi...'],
  ['dim', 1, 'HingePatternSpacing', 'Container D...', 'Dimensi...'],
  ['asm', 1, 'Container Door Fabrication', 'Container ...', 'File Na...'],
  ['part', 2, 'Container Outer Skin', 'Container ...', 'File Na...'],
  ['dim', 3, 'DoorHeightO', 'Container O...', 'Dimensi...'],
  ['part', 2, 'Container Door Inner Skin', 'Container ...', 'File Na...'],
  ['dim', 3, 'DoorHeightI', 'Container D...', 'Dimensi...'],
  ['part', 1, 'Container Door Lock', 'Container ...', 'File Na...'],
  ['dim', 2, 'ContainerDoorLockHeight', 'Container D...', 'Dimensi...'],
];

/* ---------- drawings ---------- */

const Logo = () => (
  <svg width="92" height="24" viewBox="0 0 92 24" role="img" aria-label="SOLIDWORKS">
    <g fill="none" stroke="#c92f35" strokeWidth="1.5" strokeLinecap="round">
      <path d="M6 3 Q11 2 9.500 5 L6 8 Q11 8 8.500 12.500 Q6.500 16.500 2.500 16.500 L5 10.500" />
      <path d="M18 5.500 Q12 4.500 12.500 8.500 Q16.500 11 15 14 Q13 17.500 9 16.500" />
    </g>
    <text x="23" y="17" fontFamily="Lato, sans-serif" fontSize="11" fontWeight="900" fontStyle="italic" fill="#c5282f">SOLID</text>
    <text x="55" y="17" fontFamily="Lato, sans-serif" fontSize="10" fontStyle="italic" fill="#c5282f">WORKS</text>
  </svg>
);

const slope = -200 / 345;

/* Shipping container in isometric projection, drawn in window coordinates. */
const Container = () => {
  const ribs = Array.from({ length: 23 }, (_, i) => i);
  const line = { stroke: '#151515', strokeWidth: 1, fill: 'none' };
  const top = (x: number) => 427 + (x - 355) * slope;
  const bottom = (x: number) => 587 + (x - 355) * slope;
  return (
    <svg viewBox="160 99 602 560" preserveAspectRatio="xMidYMid meet" role="img" aria-label="Shipping container model">
      <path d="M205 338 L557 135 L575 134 L712 214 V396 L702 402 L350 606 L335 601 L210 522 L203 514 Z" fill="#8f8f8f" />
      <path d="M210 338 L557 136 L575 137 L700 212 L347 420 L212 349 Z" fill="#c0c0c0" />
      <path d="M218 345 L565 145 L690 218 L347 416 Z" fill="#c8c8c8" />
      <path d="M210 338 L556 137 M216 343 L563 144 M218 346 L565 146 L690 219 M575 137 L700 209 M565 144 L693 217 M347 416 L690 218" {...line} />
      <path d="M221 343 L565 145 M349 418 L692 220" {...line} strokeWidth=".6" />
      <path d="M347 418 L693 219 L702 223 V228 L355 428 Z" fill="#c0c0c0" />
      <path d="M347 417 L693 218" {...line} />
      <path d="M354 424 L702 223" {...line} strokeWidth=".8" />
      <path d="M355 427 L702 227 V232 L355 432 Z" fill="#757575" />

      {/* corrugated side */}
      <path d="M355 428 L702 227 V387 L355 587 Z" fill="#9c9c9c" />
      {ribs.map(i => {
        const x = 356 + i * 15;
        const quad = (a: number, b: number) => `M${a} ${top(a) + 2} L${b} ${top(b) + 2} V${bottom(b) - 2} L${a} ${bottom(a) - 2} Z`;
        return (
          <g key={i}>
            <path d={quad(x + 7, x + 9)} fill="#6e6e6e" />
            <path d={quad(x + 9, x + 13)} fill="#929292" />
            <path d={quad(x + 13, x + 15)} fill={i % 3 ? '#7c7c7c' : '#585858'} />
            <path d={`M${x + 0.5} ${top(x)} V${bottom(x)} M${x + 7.5} ${top(x + 7)} V${bottom(x + 7)}`} {...line} strokeWidth=".9" />
            <path d={`M${x + 10.5} ${top(x + 10)} V${bottom(x + 10)} M${x + 13.5} ${top(x + 13)} V${bottom(x + 13)}`} {...line} strokeWidth=".6" />
          </g>
        );
      })}
      <path d="M355 428 L702 227" {...line} strokeWidth="1.4" />
      <path d="M355 586 L702 386 V402 L355 603 Z" fill="#858585" stroke="#1c1c1c" />
      <path d="M354 605 L702 403" {...line} strokeWidth="1.4" />
      <path d="M453 532 L475 519 V530 L453 543 Z M579 460 L601 447 V457 L579 470 Z" fill="#555" stroke="#111" />
      <path d="M454 537 L470 529 L474 530 L454 542 Z M580 464 L594 455 L600 457 L580 469 Z" fill="#d6d6d6" />
      <path d="M702 224 L711 220 V391 L702 398 Z" fill="#979797" stroke="#333" strokeWidth=".7" />
      <path d="M701 224 V400 M699 230 V388" {...line} strokeWidth="1.4" />

      {/* door end */}
      <path d="M203 352 L347 435 V600 L203 516 Z" fill="#636363" />
      <path d="M203 514 L212 519 L336 590 V600 L212 528 Z" fill="#777" />
      <path d="M212 349 L217 345 L347 416 L343 424 Z" fill="#b4b4b4" />
      <path d="M212 349 L338 422 M215 353 L338 425 M212 519 L336 590 M212 526 L334 598 M203 354 V514" {...line} />
      <path d="M203 354 V514" {...line} strokeWidth="2" />
      <path d="M222 344 L336 410" {...line} strokeWidth=".6" strokeDasharray="2 2" stroke="#777" />
      <path d="M264 384 L268 386 V553 L264 550 Z M276 392 L279 394 V562 L276 559 Z" fill="#939393" stroke="#222" strokeWidth=".7" />
      <path d="M272 388 V556" {...line} strokeWidth="2" />
      <path d="M259 381 L286 396 M258 548 L287 565" {...line} strokeWidth="4" strokeDasharray="3 1.500" />
      <path d="M262 386 L284 399 M262 546 L276 560" {...line} stroke="#aaa" strokeWidth="2" strokeDasharray="2 3" />
      <path d="M268 511 V514 M268 524 V528 M278 517 V521 M278 530 V534 M268 545 V548" {...line} strokeWidth="3" />
      <path d="M252 511 L264 518 M280 526 L291 533" {...line} strokeWidth="2" />
      {[0, 1, 2, 3, 4, 5].map(i => (
        <path key={i} d={`M215 ${467 + i * 3.8} L${[259, 252, 247, 243, 245, 252][i]} ${467 + i * 3.8 + [24, 20, 16, 14, 15, 18][i]}`} {...line} strokeWidth="2" strokeDasharray="3 1 2 .8" />
      ))}
      {[0, 64, 129].map(d => (
        <g key={d} fill="#8d8d8d" stroke="#141414">
          <path d={`M197.500 ${360 + d} L202 ${362 + d} L230 ${382 + d} L229 ${384 + d} L202 ${373 + d} L197.500 ${370 + d} Z`} />
          <path d={`M315 ${432 + d} L346 ${442 + d} L353 ${445 + d} V${451 + d} L346 ${452 + d} L316 ${435 + d} Z`} />
          <path d={`M208 ${370 + d} l2 1 M215 ${374 + d} l2 1 M328 ${438 + d} l2 1 M336 ${443 + d} l2 1`} strokeWidth="2" />
        </g>
      ))}
      <path d="M347 436 L353 433 V597 L347 600 Z" fill="#9a9a9a" stroke="#161616" />
      <path d="M346 436 V600" {...line} strokeWidth="2" />
      {[0, 64, 128].map(d => (
        <path key={d} d={`M346 ${444 + d} L354 ${443 + d} V${451 + d} L346 ${453 + d} Z`} fill="#777" stroke="#111" />
      ))}

      {/* corner castings */}
      <g stroke="#141414" strokeWidth="1">
        <path d="M197 343 L208 337 L221 343 L213 350 L205 356 L197 351 Z" fill="#9b9b9b" />
        <path d="M197 343 L206 347 L219 341 M205 347 V356 M205 342 L211 340" fill="none" />
        <path d="M554 136 L565 130 L575 135 V139 L564 144 L554 139 Z" fill="#adadad" />
        <path d="M554 136 L564 140 L575 135" fill="none" />
        <path d="M560 136 L568 133" strokeWidth="2" fill="none" />
        <path d="M692 216 L702 210 L713 215 V224 L703 229 L702 222 Z" fill="#a3a3a3" />
        <path d="M693 216 L703 220 L713 215 M703 220 V229 M707 220 V225" fill="none" />
        <path d="M698 215 L705 212" strokeWidth="2" fill="none" />
        <path d="M334 423 L343 417 L354 422 V430 L345 436 L334 431 Z" fill="#a3a3a3" />
        <path d="M334 423 L345 427 L354 422 M345 427 V436 M340 422 L346 420 M339 428 V431 M349 427 V431" fill="none" />
        <path d="M197 517 L205 513 L212 517 V525 L205 529 L197 525 Z" fill="#a9a9a9" />
        <path d="M197 517 L205 520 L212 517 M205 520 V529 M200 520 V524" fill="none" />
        <path d="M334 597 L342 592 L354 597 V603 L345 608 L334 604 Z" fill="#a9a9a9" />
        <path d="M334 597 L345 601 L354 597 M345 601 V608 M339 600 V604 M349 600 V604" fill="none" />
        <path d="M702 390 L713 387 V396 L702 402 Z" fill="#8f8f8f" />
        <path d="M707 391 V396" fill="none" />
      </g>

      {/* axis triad */}
      <g strokeWidth="2.400" fontFamily="Roboto, sans-serif" fontSize="9">
        <path d="M193.500 616 V601" stroke="#1d5c1f" />
        <path d="M190 603 L193.500 593 L197 603 Z" fill="#1c7a24" />
        <path d="M193.500 616 L206 622" stroke="#b02020" />
        <path d="M203 625 L213 626 L206 619 Z" fill="#c72525" />
        <path d="M193.500 616 L182 622" stroke="#2222a8" />
        <path d="M185 625 L175 626 L182 619 Z" fill="#2a2ac4" />
        <text x="191" y="593" fill="#2b8a32">Y</text>
        <text x="169" y="629" fill="#2a2ac4">Z</text>
        <text x="210" y="629" fill="#d03030">X</text>
      </g>
    </svg>
  );
};

const DriveWorksMark = () => (
  <svg width="25" height="30" viewBox="0 0 25 30" role="img" aria-label="DriveWorks">
    <rect x="0" y="0" width="19" height="19" fill="#20388f" />
    <rect x="5.500" y="11" width="19" height="19" fill="#d91a1f" stroke="#fff" />
    <text x="2" y="8" fontFamily="Roboto" fontWeight="700" fontSize="7" fill="#fff">Drive</text>
    <text x="7" y="19" fontFamily="Roboto" fontSize="6" fill="#fff">Works</text>
  </svg>
);

const WindowsOrb = () => (
  <svg width="31" height="31" viewBox="0 0 32 32" aria-hidden="true">
    <defs><radialGradient id="orb" cx=".5" cy=".8" r=".8"><stop offset="0" stopColor="#4fb4e6" /><stop offset=".5" stopColor="#1d5f9d" /><stop offset="1" stopColor="#6f9bb8" /></radialGradient></defs>
    <circle cx="16" cy="16" r="14.500" fill="url(#orb)" stroke="#0a3552" />
    <path d="M9 10 Q12 8 15.500 10 L14.500 15.500 Q11 14 8 15.500 Z" fill="#ee5a2b" />
    <path d="M16.500 10.500 Q20 12 24 10 L22.500 16 Q19 17.500 15.500 16 Z" fill="#8ac73f" />
    <path d="M7.500 16.500 Q11 15 14.300 16.800 L13 22.500 Q10 21 6.500 22 Z" fill="#3da5e3" />
    <path d="M15.300 17.300 Q19 18.500 22.300 17 L21 22.500 Q17 24 14 22.500 Z" fill="#fbc92d" />
  </svg>
);

const letter = { fontFamily: 'Roboto, sans-serif', fontWeight: 700 };
const fold = (c: string) => <path d="M17 17 L27 14 L26 25 L18 25 Z" fill="#fff" stroke={c} strokeWidth=".8" />;

const launchers: [string, ReactNode, ('run' | 'active')?][] = [
  ['File Explorer', <><path d="M2 5 L10 2 L14 5 H25 V24 H2 Z" fill="#e9c55e" /><path d="M1 9 H26 L25 25 H2 Z" fill="#f7e08e" /><path d="M5 26 V17 H23 V26 H18 V21 H10 V26 Z" fill="#7db8e8" /></>, 'run'],
  ['Opera', <><ellipse cx="14" cy="14" rx="11.500" ry="12" fill="#d3171e" /><path d="M12 3 Q4 13 14 25" stroke="#f6b8b4" strokeWidth="2.500" fill="none" /><path d="M5 7 Q1 14 5 21 L8 20 Q5 14 8 6 Z" fill="#e8504c" /></>],
  ['Outlook', <><rect x="2" y="2" width="24" height="24" fill="#f7dd83" /><text x="2" y="20" fontSize="20" fill="#e08a12" {...letter}>O</text><circle cx="21" cy="12" r="5" fill="#f8f1d6" stroke="#cf9a28" /><path d="M21 9 V12 H23" stroke="#8a6a20" fill="none" /><path d="M16 19 L26 17 V25 H17 Z" fill="#fff" stroke="#d8b052" /></>],
  ['Notepad', <><path d="M9 3 L24 5 L20 23 L3 21 Z" fill="#6eb1cd" /><path d="M9 3 L24 5 L22.500 11 L6 13 Z" fill="#a9d3e4" /><path d="M3 21 L20 23 L24 5 L26 24 L5 25 Z" fill="#e6eef0" /></>, 'run'],
  ['DMD', <><rect x="1" y="1" width="26" height="26" fill="#fff" /><text x="2" y="17" fontSize="8" fontFamily="DejaVu Sans, sans-serif" fontWeight="700" fill="#cf1f33">DMD</text></>],
  ['PDF viewer', <><path d="M1 1 H21 L27 7 V27 H1 Z" fill="#f28a1d" /><path d="M21 1 L27 7 H21 Z" fill="#3b2a12" /><path d="M20 5 Q10 3 9 10.500 Q9 16 16 15.500 L18 10.500 H14" fill="none" stroke="#fff" strokeWidth="2.400" /><text x="8" y="25" fontSize="7" fill="#fff" {...letter}>PDF</text></>],
  ['Recorder', <><rect x="1" y="1" width="26" height="26" fill="#dc4f22" /><rect x="4" y="5" width="14" height="13" fill="none" stroke="#fff" strokeWidth="2" strokeDasharray="3 2" /><rect x="10" y="11" width="14" height="11" fill="#dc4f22" stroke="#fff" strokeWidth="2" /><rect x="13" y="14" width="8" height="5" fill="none" stroke="#fff" strokeWidth="1.500" /></>],
  ['Vivaldi', <><rect x="2" y="2" width="24" height="24" rx="6" fill="#e8333a" /><circle cx="14" cy="14" r="8.500" fill="#fff" /><path d="M10.500 11 L14 17.500 L17.500 11" fill="none" stroke="#e8333a" strokeWidth="2.600" strokeLinecap="round" /></>, 'run'],
  ['Word', <><path d="M2 4 L26 2 V26 L2 24 Z" fill="#e6effa" /><path d="M10 2 H26 V16 Z" fill="#9cc2ea" /><text x="3" y="21" fontSize="19" fill="#1d4fa8" {...letter}>W</text>{fold('#7ea4d4')}</>],
  ['Excel', <><path d="M2 3 H26 V26 H2 Z" fill="#cfe7cd" /><path d="M12 2 H26 V14 Z" fill="#7fbd7e" /><text x="4" y="21" fontSize="20" fill="#237a34" {...letter}>X</text>{fold('#84b885')}</>],
  ['SOLIDWORKS 2016', <><path d="M2 5 L15 1 L27 4 V21 L16 27 L2 22 Z" fill="#b51a1e" /><path d="M2 5 L15 1 L27 4 L16 8 Z" fill="#e04a45" /><path d="M16 8 L27 4 V21 L16 27 Z" fill="#7d1014" /><text x="4" y="19" fontSize="12" fill="#fff" {...letter}>S</text><text x="15" y="19" fontSize="12" fill="#fff" {...letter}>W</text><text x="11" y="27" fontSize="7" fill="#fff" {...letter}>2016</text></>, 'active'],
  ['Snipping Tool', <><ellipse cx="12" cy="9" rx="10" ry="7" fill="#f2e9ec" stroke="#cc6c7e" /><path d="M5 6 L18 12 M8 4 L12 14" stroke="#dfa3ac" strokeWidth="1.500" /><path d="M12 12 L22 23 M19 13 L16 22" stroke="#dce6ea" strokeWidth="2" /><circle cx="23.500" cy="22" r="3" fill="none" stroke="#3e7dc4" strokeWidth="2" /><circle cx="16" cy="23.500" r="2.600" fill="none" stroke="#3e7dc4" strokeWidth="2" /></>],
  ['Sticky Notes', <><path d="M5 4 L18 7 L14 19 L2 15 Z" fill="#8fcf8c" /><path d="M8 5 L19 5 L18 19 L6 17 Z" fill="#8abde0" /><path d="M12 10 L25 8 L27 21 L14 24 Z" fill="#fbe46d" /></>],
  ['PowerPoint', <><path d="M2 2 H26 V26 H2 Z" fill="#f6d9c8" /><path d="M12 2 H26 V14 Z" fill="#e68a5c" /><text x="5" y="21" fontSize="19" fill="#cf4d17" {...letter}>P</text><path d="M16 16 L26 14 V25 H17 Z" fill="#fff" stroke="#dd8a62" /><circle cx="21.500" cy="20" r="2.800" fill="#e2733f" /></>, 'run'],
  ['GoToMeeting', <><g fill="none" stroke="#fff" strokeWidth="2">{[0, 45, 90, 135, 180, 225, 270, 315].map(a => <circle key={a} cx="14" cy="5.500" r="3" transform={`rotate(${a} 14 14)`} />)}</g><circle cx="14" cy="14" r="4" fill="none" stroke="#5fb4dc" strokeWidth="1.500" /></>, 'run'],
];

/* ---------- page ---------- */

export default function App() {
  return (
    <Shell>
      <Global />
      <TitleBar>
        <Brand><Logo /></Brand>
        <MenuBar>
          {menus.map(m => <button key={m}>{m}</button>)}
          <button aria-label="Pin menu"><Icon name="pin" size={9} /></button>
        </MenuBar>
        <QuickBar>
          {quick.map(([n, w]) => <QuickButton key={n} $w={w} aria-label={n}><Icon name={n} size={14} /><Caret $tone="#555" /></QuickButton>)}
          <QuickButton $w={27} $on aria-label="Select"><Icon name="arrow" /><Caret /></QuickButton>
          <QuickButton $w={16} aria-label="Rebuild"><Icon name="traffic" /></QuickButton>
          <QuickButton $w={18} aria-label="File properties"><Icon name="list" size={12} /></QuickButton>
          <QuickButton $w={24} aria-label="Options"><Icon name="gear" /><Caret $tone="#555" /></QuickButton>
        </QuickBar>
        <DocTitle>Shipping Container Assembly.SLDASM *</DocTitle>
        <SearchBox>
          <Icon name="prompt" size={11} />
          <input aria-label="Search Commands" placeholder="Search Commands" />
          <Icon name="search" size={16} />
          <Caret $tone="#555" />
        </SearchBox>
        <WindowButtons>
          <span>?</span><Caret $tone="#555" />
          <button aria-label="Minimize"><Icon name="min" size={10} /></button>
          <button aria-label="Restore"><Icon name="restore" size={11} /></button>
          <button aria-label="Close"><Icon name="close" size={9} /></button>
        </WindowButtons>
      </TitleBar>

      <Ribbon>
        {commands.map(c => (
          <Command key={c.text} $w={c.w} $line={c.line} $menu={c.menu} disabled={c.off}>
            <Icon name={c.icon} size={13} />
            <span>{c.text}</span>
            {c.menu && <Caret as="i" />}
          </Command>
        ))}
      </Ribbon>

      <Workspace>
        <Modeler>
          <TabRow>
            {tabs.map(([t, w], i) => <CommandTab key={t} $w={w} $on={i === 0}>{t}</CommandTab>)}
            <ViewBar>
              {views.map(([n, w, menu]) => <ViewButton key={n} $w={w} aria-label={n}><Icon name={n} />{menu && <Caret $tone="#8a8d95" />}</ViewButton>)}
              <Grow />
              <ViewButton $w={17} aria-label="Dock left"><Icon name="dockL" size={9} /></ViewButton>
              <ViewButton $w={17} aria-label="Dock right"><Icon name="dockR" size={9} /></ViewButton>
              <ViewButton $w={17} aria-label="Minimize document"><Icon name="min" size={9} /></ViewButton>
              <ViewButton $w={18} aria-label="Restore document"><Icon name="restore" size={10} /></ViewButton>
              <ViewButton $w={12} aria-label="Close document"><Icon name="close" size={9} /></ViewButton>
            </ViewBar>
          </TabRow>

          <ModelBody>
            <TreePane>
              <PaneGrip />
              <PaneTabs>
                {['assembly', 'props', 'config', 'target', 'wheel'].map(n => <button key={n} aria-label={n}><Icon name={n} size={14} /></button>)}
                <button aria-label="More">›</button>
              </PaneTabs>
              <FilterBox><Icon name="filter" size={14} /><Caret $tone="#555" /><input aria-label="Filter tree" /></FilterBox>
              <Tree>
                <TreeItem $root><Icon name="assembly" size={13} />Shipping Container Assembly&nbsp; (V</TreeItem>
                {tree.map(([icon, label, more]) => (
                  <TreeItem key={label}><b>{more && <Expander />}</b><Icon name={icon} size={13} />{label}</TreeItem>
                ))}
              </Tree>
              <Grow />
              <ScrollBar $h={13}><ScrollArrow /><Thumb $w="49px" $gap={7} /><ScrollArrow $right /></ScrollBar>
              <SideGrip aria-label="Collapse tree" />
            </TreePane>
            <Canvas>
              <Container />
              <ViewName>*Isometric</ViewName>
            </Canvas>
          </ModelBody>

          <SheetTabs>
            {['first', 'previous', 'next', 'last'].map((n, i) => (
              <SheetNav key={n} aria-label={n}><svg width="8" height="8" viewBox="0 0 8 8"><path d={['M1 1V7M7 1L3 4L7 7Z', 'M6 1L2 4L6 7Z', 'M2 1L6 4L2 7Z', 'M7 1V7M1 1L5 4L1 7Z'][i]} fill="#8a8a9e" stroke="#8a8a9e" /></svg></SheetNav>
            ))}
            <SheetTab $w={52} $on>Model</SheetTab>
            <SheetTab $w={60}>3D Views</SheetTab>
            <SheetTab $w={96}>Motion Study 1</SheetTab>
          </SheetTabs>

          <TaskTabs>
            {['home', 'library', 'explorer', 'palette', 'wheel', 'list', 'driveworks'].map(n => <button key={n} aria-label={n}><Icon name={n} size={13} /></button>)}
          </TaskTabs>
        </Modeler>

        <Panel>
          <PanelTitle><span>»</span><h2>DriveWorksXpress</h2><Icon name="pinDark" size={11} /></PanelTitle>
          <PanelTools>
            <Tool aria-label="Back"><Icon name="back" size={11} /></Tool>
            <Tool aria-label="Forward"><Icon name="forward" size={11} /></Tool>
            <Tool $gap={5} aria-label="About"><Icon name="about" size={11} /></Tool>
            <Tool aria-label="Capture"><Icon name="capture" size={11} /></Tool>
            <Tool aria-label="Form"><Icon name="form" size={11} /></Tool>
            <Tool $on aria-label="Rules">=x</Tool>
            <Tool aria-label="Run"><Icon name="play" size={11} /></Tool>
            <Tool $gap={5} aria-label="Close add-in"><Icon name="cross" size={11} /></Tool>
            <Grow />
            <Tool aria-label="Help"><Icon name="help" size={10} /></Tool>
          </PanelTools>
          <Intro>
            <div>
              <h3>DriveWorksXpress</h3>
              <p>The list or tree shows the rules that you selected.</p>
              <p>Select a rule to edit.</p>
            </div>
            <DriveWorksMark />
          </Intro>
          <Options>
            <Choices>
              <label><input type="checkbox" defaultChecked />Show Missing Rules Only</label>
              <label><input type="radio" name="view" />View Tree</label>
              <label><input type="radio" name="view" defaultChecked />View List</label>
            </Choices>
            <BuildButton disabled>Build</BuildButton>
          </Options>
          <RuleBox>
            <RuleScroll>
              <RuleTable>
                <colgroup><col width="160" /><col width="67" /><col width="53" /><col width="53" /><col /></colgroup>
                <thead><tr><th>Name</th><th>File Name</th><th>Type</th><th>Value</th><th>Formula</th></tr></thead>
                <tbody>
                  {rules.map(([kind, level, name, file, type]) => (
                    <RuleRow key={name} $kind={kind}>
                      <td><RuleName $level={level}><Icon name={ruleIcon[kind]} size={12} />{name}</RuleName></td>
                      <td>{file}</td><td>{type}</td><td /><td />
                    </RuleRow>
                  ))}
                  {[0, 1, 2, 3, 4, 5].map(i => <RuleRow key={i} $kind="empty"><td /><td /><td /><td /><td /></RuleRow>)}
                </tbody>
              </RuleTable>
            </RuleScroll>
            <ScrollBar $h={14}><ScrollArrow /><Thumb $w="253px" $gap={7} /><ScrollArrow $right /></ScrollBar>
            <Pointer width="11" height="16" viewBox="0 0 11 16"><path d="M1 1 V12 L4 9.500 L6 14 L8 13 L6 9 H9.500 Z" fill="#fff" stroke="#444" /></Pointer>
          </RuleBox>
        </Panel>
      </Workspace>

      <StatusBar>
        <span>SOLIDWORKS Premium 2016 x64 Edition</span>
        <Grow />
        <span>Fully Defined</span><span>Editing Assembly</span><span>Custom</span><i />
        <Icon name="tag" size={12} />
      </StatusBar>

      <TaskBar>
        <StartButton aria-label="Start"><WindowsOrb /></StartButton>
        <Launchers>
          {launchers.map(([label, drawing, state]) => (
            <Launcher key={label} aria-label={label} $run={!!state} $active={state === 'active'}>
              <svg width="27" height="27" viewBox="0 0 28 28" aria-hidden="true">{drawing}</svg>
            </Launcher>
          ))}
        </Launchers>
        <Tray>
          ES<i />
          <Icon name="battery" size={13} /><Icon name="network" size={13} /><Icon name="sound" size={13} />
          <Clock><span>11:26</span><span>17/08/2017</span></Clock>
          <ShowDesktop aria-label="Show desktop" />
        </Tray>
      </TaskBar>
    </Shell>
  );
}
